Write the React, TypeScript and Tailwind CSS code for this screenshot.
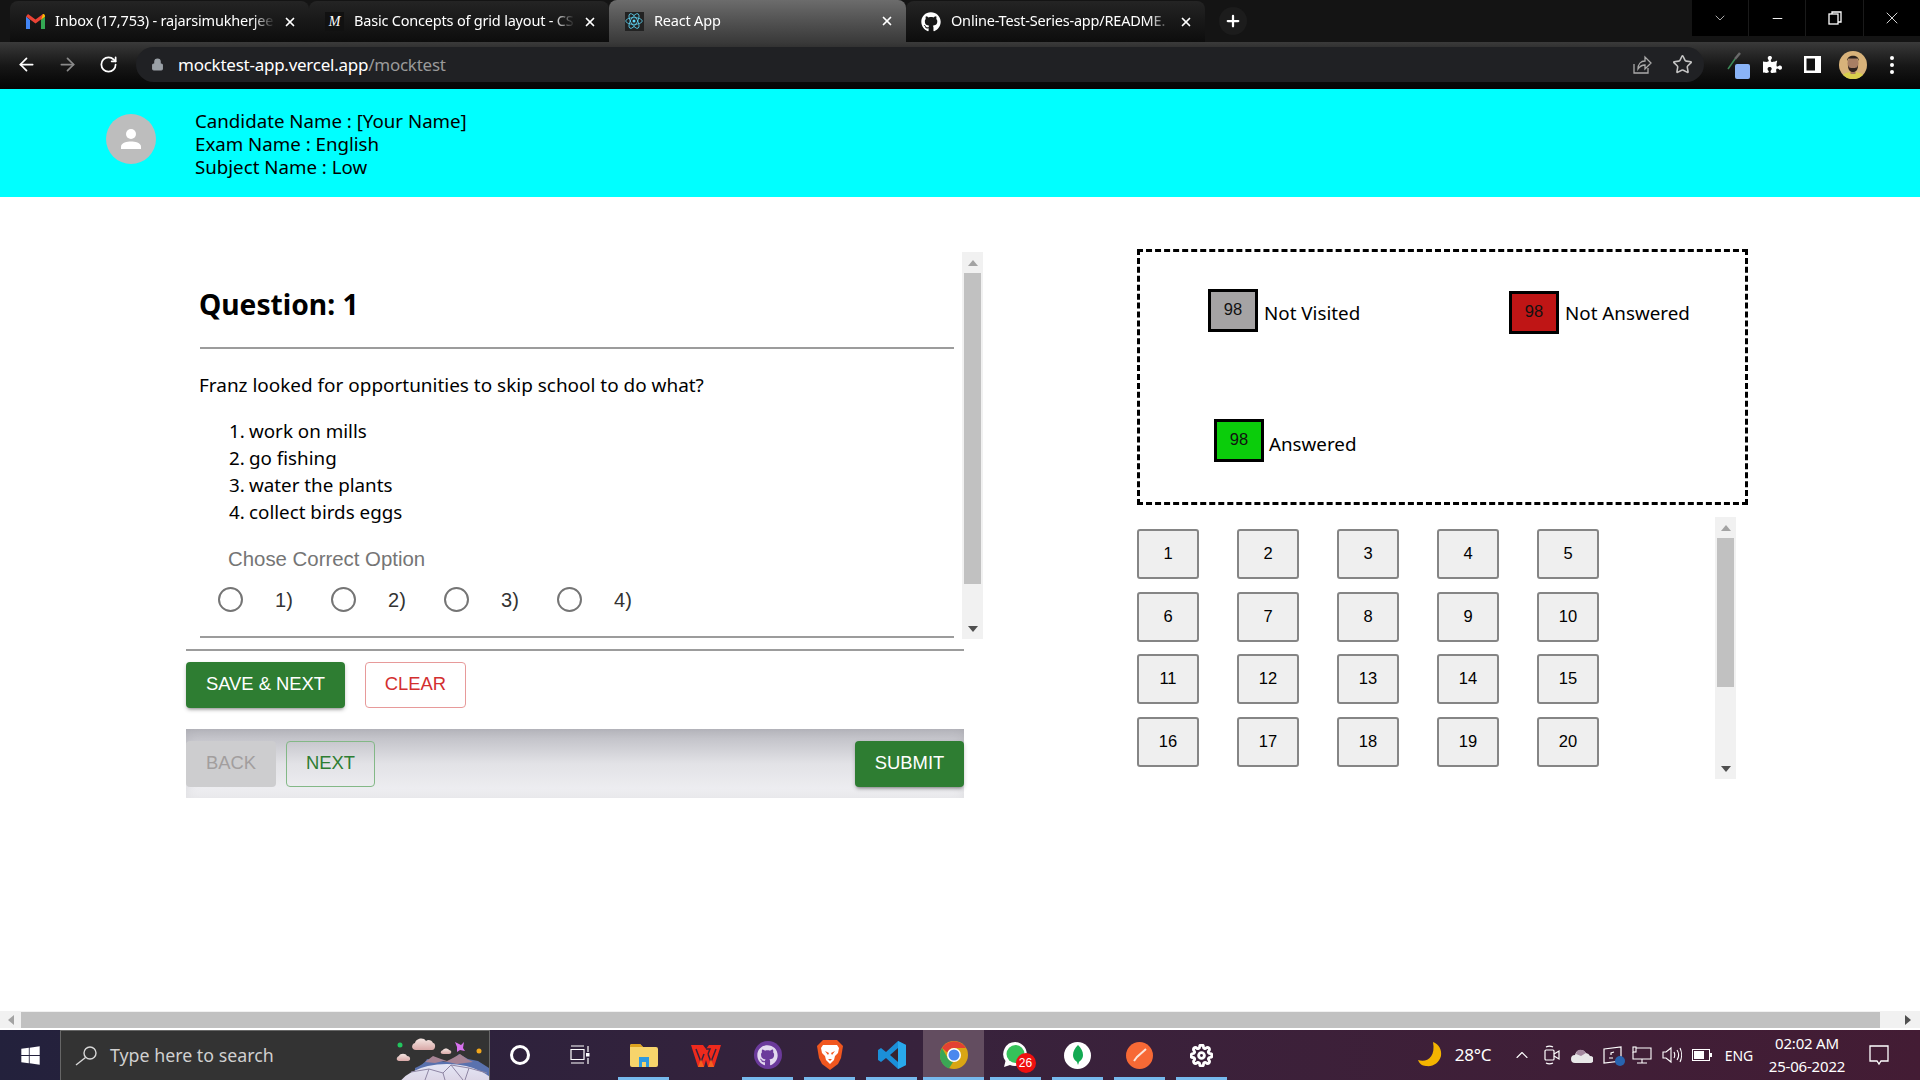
import { ArrowLeft, ArrowRight, ChevronDown, ChevronUp, Lock, Minus, Plus, RotateCw, Star, X } from "lucide-react";
import { FaGithub, FaPuzzlePiece, FaWindows } from "react-icons/fa";
import { FiSettings } from "react-icons/fi";

const UI_FONT = "font-['Noto_Sans','Open_Sans',sans-serif]";
const ARIAL = "font-['Liberation_Sans',Arial,sans-serif]";

function GmailIcon() {
  return (
    <svg width="19" height="15" viewBox="0 0 19 15">
      <path d="M0 2.5 0 15h4V6z" fill="#4285f4" />
      <path d="M15 6v9h4V2.500z" fill="#34a853" />
      <path d="M0 2.500 9.500 9.500 19 2.500 17 0 9.500 5.500 2 0z" fill="#ea4335" />
      <path d="M15 6l4-3.500V2c0-1.500-1-2-2-2z" fill="#fbbc04" />
    </svg>
  );
}

function ReactIcon({ size = 18 }: { size?: number }) {
  return (
    <svg width={size} height={size} viewBox="-12 -12 24 24" fill="none" stroke="#61dafb" strokeWidth="1">
      <circle r="2" fill="#61dafb" stroke="none" />
      <ellipse rx="11" ry="4.500" />
      <ellipse rx="11" ry="4.500" transform="rotate(60)" />
      <ellipse rx="11" ry="4.500" transform="rotate(120)" />
    </svg>
  );
}

function Tab({ width, title, icon, active }: { width: string; title: string; icon: React.ReactNode; active?: boolean }) {
  return (
    <div className={`${width} ${active ? "h-[42px] self-end rounded-t-lg bg-gradient-to-b from-[#6c6c6c] to-[#3a3a3a]" : "h-[41px] self-end rounded-t-lg bg-gradient-to-b from-[#242424] to-[#0d0d0d]"} flex shrink-0 items-center pl-[15px] pr-[12px]`}>
      <span className="flex w-[20px] shrink-0 justify-center">{icon}</span>
      <span className="ml-[10px] min-w-0 flex-1 overflow-hidden whitespace-nowrap pb-[1px] text-[14.500px] tracking-[-0.2px] text-white [mask-image:linear-gradient(to_right,black_90%,transparent)]">{title}</span>
      <X size={14} strokeWidth={3} className="ml-[8px] shrink-0 text-white" />
    </div>
  );
}

function TabStrip() {
  return (
    <div className="flex h-[42px] shrink-0 items-end bg-[#141414] pl-[10px]">
      <Tab width="w-[299px]" title="Inbox (17,753) - rajarsimukherjee" icon={<GmailIcon />} />
      <Tab width="w-[300px]" title="Basic Concepts of grid layout - CS" icon={<span className="flex h-[19px] w-[19px] items-center justify-center bg-[#111] font-['Liberation_Serif',serif] text-[14px] italic tracking-[-1px] text-white">M</span>} />
      <Tab active width="w-[297px]" title="React App" icon={<span className="flex h-[19px] w-[19px] items-center justify-center bg-[#222]"><ReactIcon /></span>} />
      <Tab width="w-[299px]" title="Online-Test-Series-app/README." icon={<FaGithub size={20} className="text-white" />} />
      <div className="mb-[7px] ml-[14px] flex h-[28px] w-[28px] items-center justify-center rounded-full bg-[#1c1c1c]">
        <Plus size={18} strokeWidth={3} className="text-white" />
      </div>
      <div className="mb-[6px] ml-auto flex h-[36px] w-[228px] self-start bg-black text-white">
        <span className="flex w-[57px] items-center justify-center border-r border-[#1a1a1a]"><ChevronDown size={16} strokeWidth={1} /></span>
        <span className="flex w-[57px] items-center justify-center border-r border-[#1a1a1a]"><Minus size={15} strokeWidth={1.500} /></span>
        <span className="flex w-[58px] items-center justify-center border-r border-[#1a1a1a]">
          <svg width="14" height="14" viewBox="0 0 14 14" fill="none" stroke="white" strokeWidth="1.300"><rect x="1" y="3" width="9" height="10" /><path d="M4 3V1h9v10h-3" /></svg>
        </span>
        <span className="flex w-[56px] items-center justify-center"><X size={20} strokeWidth={1} /></span>
      </div>
    </div>
  );
}

function Toolbar() {
  return (
    <div className="flex h-[47px] shrink-0 items-center bg-gradient-to-b from-[#3a3a3a] via-[#171717] to-[#050505] pb-[2px] text-white">
      <div className="flex w-[136px] shrink-0 items-center pl-[16px]">
        <ArrowLeft size={21} strokeWidth={2} />
        <ArrowRight size={21} strokeWidth={2} className="ml-[20px] text-[#8a8a8a]" />
        <RotateCw size={19} strokeWidth={2.200} className="ml-[21px]" />
      </div>
      <div className="flex h-[35px] w-[1568px] shrink-0 items-center rounded-full bg-[#202124] pl-[15px]">
        <Lock size={13} fill="#9aa0a6" strokeWidth={2} className="text-[#9aa0a6]" />
        <span className="ml-[14px] pt-[1px] text-[17px] tracking-[-0.25px]">
          mocktest-app.vercel.app<span className="text-[#9a9a9a]">/mocktest</span>
        </span>
        <svg width="22" height="22" viewBox="0 0 22 22" fill="none" stroke="#aaa" strokeWidth="1.300" className="ml-auto">
          <path d="M3 10v9h14v-5M7 15c0-5 3-8 7-8V3l6 6-6 6v-4c-3 0-5 1-7 4z" />
        </svg>
        <Star size={21} strokeWidth={1.800} className="mr-[11px] ml-[19px] text-[#c4c4c4]" />
      </div>
      <div className="relative ml-[23px] h-[28px] w-[26px] shrink-0">
        <svg width="14" height="18" viewBox="0 0 14 18" className="mt-[1px]">
          <path d="M1 17 8 7" stroke="#3c8a58" strokeWidth="1.500" />
          <path d="M8 7 13 1" stroke="#6a6a6a" strokeWidth="2.500" />
        </svg>
        <span className="absolute left-[8px] top-[13px] h-[15px] w-[15px] rounded-[2px] bg-[#8ab4f8]" />
      </div>
      <FaPuzzlePiece size={19} className="ml-[10px] shrink-0 text-white" />
      <svg width="17" height="17" viewBox="0 0 17 17" className="ml-[22px] shrink-0"><rect width="17" height="17" fill="white" /><rect x="2.500" y="2.500" width="8.500" height="12" fill="#111" /></svg>
      <svg width="28" height="28" viewBox="0 0 28 28" className="ml-[18px] shrink-0">
        <circle cx="14" cy="14" r="14" fill="#d8b27a" />
        <path d="M4 24c2-4 18-4 20 0a14 14 0 0 1-20 0z" fill="#d9cf4d" />
        <rect x="11.500" y="17" width="5" height="6" fill="#a57a5e" />
        <ellipse cx="14" cy="12.500" rx="5.500" ry="7.500" fill="#a87f64" />
        <path d="M8 10c0-7 12-7 12 0l-1.500-2.500h-9zM9 14c1 3 2 3 5 3s4 0 5-3c0 5-2 7-5 7s-5-2-5-7z" fill="#2b211c" />
      </svg>
      <span className="ml-[23px] flex w-[4px] shrink-0 flex-col gap-[3px]">
        <span className="h-[4px] w-[4px] rounded-full bg-white" />
        <span className="h-[4px] w-[4px] rounded-full bg-white" />
        <span className="h-[4px] w-[4px] rounded-full bg-white" />
      </span>
    </div>
  );
}

function Header() {
  return (
    <div className={`flex h-[108px] shrink-0 bg-[#00ffff] pl-[106px] pt-[20px] ${UI_FONT}`}>
      <div className="mt-[5px] flex h-[50px] w-[50px] items-center justify-center rounded-full bg-[#bdbdbd]">
        <svg width="30" height="30" viewBox="0 0 24 24" fill="white">
          <circle cx="12" cy="8" r="4" />
          <path d="M4 20v-2c0-3 5-4 8-4s8 1 8 4v2z" />
        </svg>
      </div>
      <div className="ml-[39px] text-[18.700px] leading-[23px] text-black">
        <div>Candidate Name : [Your Name]</div>
        <div>Exam Name : English</div>
        <div>Subject Name : Low</div>
      </div>
    </div>
  );
}

function Triangle({ up, color }: { up?: boolean; color: string }) {
  return (
    <svg width="10" height="6" viewBox="0 0 10 6" className="shrink-0">
      <path d={up ? "M5 0 10 6H0z" : "M0 0h10L5 6z"} fill={color} />
    </svg>
  );
}

function ScrollTrack({ thumbHeight, className }: { thumbHeight: string; className: string }) {
  return (
    <div className={`flex shrink-0 flex-col items-center bg-[#f1f1f1] ${className}`}>
      <div className="flex h-[21px] w-full items-center justify-center"><Triangle up color="#a3a3a3" /></div>
      <div className={`${thumbHeight} w-[17px] bg-[#c1c1c1]`} />
      <div className="mt-auto flex h-[21px] w-full items-center justify-center"><Triangle color="#505050" /></div>
    </div>
  );
}

const OPTIONS = ["work on mills", "go fishing", "water the plants", "collect birds eggs"];

function QuestionPanel() {
  return (
    <div className="flex h-[387px] justify-between pl-[14px]">
      <div className={`w-[754px] ${UI_FONT}`}>
        <h2 className="-ml-[1px] mt-[34px] text-[28.200px] font-bold leading-[36px] text-black">Question: 1</h2>
        <div className="mt-[25px] h-[2px] bg-[#9c9c9c]" />
        <p className="-ml-[1px] mt-[23px] text-[18.950px] leading-[27px] text-black">Franz looked for opportunities to skip school to do what?</p>
        <ol className="mt-[19px] pl-[29px] text-[18.800px] leading-[27px] text-black">
          {OPTIONS.map((option, i) => (
            <li key={option} className="flex">
              <span className="w-[20px]">{i + 1}.</span>
              <span>{option}</span>
            </li>
          ))}
        </ol>
        <div className={`ml-[28px] mt-[19px] text-[20.400px] leading-[28px] text-[#757575] ${ARIAL}`}>Chose Correct Option</div>
        <div className={`ml-[18px] mt-[13px] flex h-[27px] items-center text-[20px] text-[#333] ${ARIAL}`}>
          {[1, 2, 3, 4].map((n) => (
            <label key={n} className="flex w-[113px] items-center">
              <input type="radio" name="option" className="h-[25px] w-[25px] appearance-none rounded-full border-[2.500px] border-[#757575]" />
              <span className="ml-[32px]">{n})</span>
            </label>
          ))}
        </div>
        <div className="mt-[23px] h-[2px] bg-[#9c9c9c]" />
      </div>
      <ScrollTrack thumbHeight="h-[311px]" className="w-[21px]" />
    </div>
  );
}

function Actions() {
  const button = `flex h-[46px] items-center justify-center rounded-[4px] pb-[2px] text-[18.400px] ${ARIAL}`;
  const raised = "bg-[#2e7d32] text-white shadow-[0_3px_3px_-2px_rgba(0,0,0,0.3),0_2px_4px_rgba(0,0,0,0.2)]";
  return (
    <div className="w-[778px]">
      <div className="mt-[10px] h-[2px] bg-[#9c9c9c]" />
      <div className="mt-[11px] flex">
        <button className={`${button} ${raised} w-[159px]`}>SAVE &amp; NEXT</button>
        <button className={`${button} ml-[20px] w-[101px] border border-[#e79a9a] text-[#d32f2f]`}>CLEAR</button>
      </div>
      <div className="mt-[21px] flex h-[69px] bg-gradient-to-b from-[#b9b9c0] via-[#e2e2e6] to-[#f1f1f4] pt-[12px] shadow-[inset_0_0_12px_rgba(0,0,0,0.08)]">
        <button className={`${button} w-[90px] bg-[#cdcdcf] text-[#a29e9e]`}>BACK</button>
        <button className={`${button} ml-[10px] w-[89px] border border-[#83b886] text-[#2e7d32]`}>NEXT</button>
        <button className={`${button} ${raised} ml-auto w-[109px]`}>SUBMIT</button>
      </div>
    </div>
  );
}

function LegendItem({ bg, label, className, labelClass }: { bg: string; label: string; className: string; labelClass: string }) {
  return (
    <div className={`flex items-start ${className}`}>
      <span className={`${bg} flex h-[43px] w-[50px] shrink-0 items-center justify-center border-[3px] border-black pb-[2px] text-[16.500px] text-[#111] ${ARIAL}`}>98</span>
      <span className={`text-[18.800px] leading-[27px] text-black ${UI_FONT} ${labelClass}`}>{label}</span>
    </div>
  );
}

function Legend() {
  return (
    <div className="h-[256px] w-[611px] border-[3px] border-dashed border-black">
      <div className="flex">
        <LegendItem bg="bg-[#a5a3a4]" label="Not Visited" labelClass="ml-[6px] mt-[11px]" className="ml-[68px] mt-[37px] w-[301px]" />
        <LegendItem bg="bg-[#bf1515]" label="Not Answered" labelClass="ml-[6px] mt-[9px]" className="mt-[39px]" />
      </div>
      <LegendItem bg="bg-[#0bcd0b]" label="Answered" labelClass="ml-[5px] mt-[12px]" className="ml-[74px] mt-[85px]" />
    </div>
  );
}

function NumberGrid() {
  const numbers = Array.from({ length: 20 }, (_, i) => i + 1);
  return (
    <div className="mt-[12px] flex justify-between pr-[12px]">
      <div className="mt-[12.400px] grid grid-cols-[repeat(5,62px)] gap-x-[38px] gap-y-[12.500px] self-start">
        {numbers.map((n) => (
          <button key={n} className={`flex h-[50px] items-center justify-center rounded-[3px] border-2 border-[#858585] bg-[#efefef] pb-[2px] text-[16.500px] text-black ${ARIAL}`}>
            {n}
          </button>
        ))}
      </div>
      <ScrollTrack thumbHeight="h-[149px]" className="h-[262px] w-[21px]" />
    </div>
  );
}

function BottomScrollbar() {
  return (
    <div className="flex h-[19px] shrink-0 items-center border-b-2 border-white bg-[#f1f1f1]">
      <div className="flex w-[21px] justify-center"><svg width="6" height="10" viewBox="0 0 6 10"><path d="M6 0v10L0 5z" fill="#a3a3a3" /></svg></div>
      <div className="h-[16px] w-[1859px] bg-[#c1c1c1]" />
      <div className="flex flex-1 justify-end pr-[9px]"><svg width="6" height="10" viewBox="0 0 6 10"><path d="M0 0v10l6-5z" fill="#505050" /></svg></div>
    </div>
  );
}

function SearchArt() {
  return (
    <svg width="100" height="49" viewBox="0 0 100 49" className="absolute right-0 top-0">
      <defs>
        <linearGradient id="cloud" x1="0" y1="0" x2="0" y2="1">
          <stop offset="0" stopColor="#f4e6e2" />
          <stop offset="1" stopColor="#d9a9a8" />
        </linearGradient>
        <linearGradient id="planet" x1="0" y1="0" x2="0" y2="1">
          <stop offset="0" stopColor="#e4e6f6" />
          <stop offset="1" stopColor="#cbb3c4" />
        </linearGradient>
      </defs>
      <circle cx="11" cy="14" r="2.500" fill="#22c55e" />
      <circle cx="90" cy="20" r="2.500" fill="#f2a71b" />
      <path d="M27 19c-5 0-5-6-1-7 1-5 9-6 11-2 2-2 6-1 7 2 3 0 3 7-1 7z" fill="url(#cloud)" />
      <path d="M10 30c-3 0-3-4 0-5 1-3 7-3 8 0 4 0 4 5 1 5z" fill="url(#cloud)" />
      <path d="M54 23c-3 0-3-3 0-4 1-2 5-2 6 0 3 0 3 4 0 4z" fill="url(#cloud)" />
      <path d="m66 11 6 3 3-3-1 6 2 3-5-1-3 2 0-5z" fill="#d872ee" />
      <path d="M26 37c6-3 10-5 12-9l6 1 8 1 6 1 5-1 7-7 9 5 10 2 11 7v12H26z" fill="#5a72ae" />
      <path d="m36 31 8-6 8 3 6 2 6-3 7-4 7 5 6 3-16 2-14-3-8 2z" fill="#a78495" />
      <ellipse cx="58" cy="60" rx="50" ry="27" fill="url(#planet)" />
      <path d="M22 41 40 38l14 4 8-8 18 3 18 5M40 38l-4 11M54 42l2 7M62 34l12 15M80 37l-4 12" fill="none" stroke="#8f86a4" strokeWidth="1" />
    </svg>
  );
}

function AppSlot({ children, active, running = true }: { children: React.ReactNode; active?: boolean; running?: boolean }) {
  return (
    <div className={`relative flex h-full items-center justify-center ${active ? "w-[61px] bg-[#634d60]" : "w-[51px]"}`}>
      {children}
      {running && <span className="absolute inset-x-0 bottom-0 h-[3px] bg-[#76b9ed]" />}
    </div>
  );
}

function TrayItem({ children, className = "w-[30px]" }: { children: React.ReactNode; className?: string }) {
  return <div className={`flex h-full shrink-0 items-center justify-center ${className}`}>{children}</div>;
}

function Taskbar() {
  return (
    <div className={`flex h-[50px] shrink-0 items-stretch bg-gradient-to-r from-[#23213c] via-[#38223c] to-[#431c34] text-white ${UI_FONT}`}>
      <div className="flex w-[60px] items-center justify-center"><FaWindows size={21} /></div>
      <div className="relative flex w-[430px] items-center overflow-hidden border border-b-0 border-[#666] bg-[#333] pl-[14px]">
        <svg width="22" height="20" viewBox="0 0 22 20" fill="none" stroke="#d8d8d8" strokeWidth="1.400">
          <circle cx="15" cy="7" r="6" />
          <path d="M10.500 11.500 1 19" />
        </svg>
        <span className="ml-[13px] text-[17.800px] text-[#d0d0d0]">Type here to search</span>
        <SearchArt />
      </div>
      <div className="flex w-[60px] items-center justify-center">
        <span className="h-[20px] w-[20px] rounded-full border-[3px] border-white" />
      </div>
      <div className="flex w-[60px] items-center justify-center">
        <svg width="20" height="20" viewBox="0 0 20 20" fill="none" stroke="white" strokeWidth="1.200">
          <path d="M1 1h13M1 4.500h13v10H1zM1 18h13M18 1v6M18 13v6" />
          <rect x="16" y="8" width="3.500" height="3.500" fill="white" stroke="none" />
        </svg>
      </div>
      <div className="ml-[8px] flex items-stretch gap-[11px]">
        <AppSlot>
          <svg width="28" height="23" viewBox="0 0 28 23">
            <path d="M0 2a2 2 0 0 1 2-2h8l3 3h13a2 2 0 0 1 2 2v16a2 2 0 0 1-2 2H2a2 2 0 0 1-2-2z" fill="#f7d46b" />
            <path d="M0 2a2 2 0 0 1 2-2h8l3 3H0z" fill="#dda21f" />
            <path d="M9 23v-9h10v9h-3v-5h-4v5z" fill="#2e9ae0" />
            <rect x="9" y="13" width="10" height="3" fill="#2e9ae0" />
          </svg>
        </AppSlot>
        <AppSlot running={false}>
          <svg width="30" height="23" viewBox="0 0 30 23">
            <path d="M0 1h12l3 4 3-4h12l-7 22h-6l-2-7-2 7H7z" fill="#ee2a1d" />
            <path d="M5 5l5 13 3-8M25 5l-5 13-3-8M15 5l4 0-2 5" fill="none" stroke="#38223c" strokeWidth="1.500" />
            <path d="M7 23h6l-3-8zM17 23h6l-3-8z" fill="#f5601e" />
          </svg>
        </AppSlot>
        <AppSlot>
          <span className="flex h-[28px] w-[28px] items-center justify-center rounded-full bg-[#6b3a9b]"><FaGithub size={21} className="text-[#e3d9ef]" /></span>
        </AppSlot>
        <AppSlot>
          <svg width="26" height="30" viewBox="0 0 26 30">
            <path d="M6 0h14l3 3 3 3-2 12-3 6-8 6-8-6-3-6L0 6l3-3z" fill="#f1571f" />
            <path d="M6 5h14l2 3-1 5-3 3-1 4-4 4-4-4-1-4-3-3-1-5z" fill="white" />
            <path d="M8 11l4 2-1 2zM18 11l-4 2 1 2zM11 19h4l-2 2z" fill="#f1571f" />
          </svg>
        </AppSlot>
        <AppSlot>
          <svg width="30" height="30" viewBox="0 0 30 30">
            <path d="M21 1 29 5v20l-8 4L9 18l-5 4-3-2v-10l3-2 5 4z" fill="#1b8fd8" />
            <path d="M21 8 13 15l8 7z" fill="#38232e" />
            <path d="M21 1 29 5v20l-8 4z" fill="#29a9ec" />
          </svg>
        </AppSlot>
        <div className="-mx-[5px]">
          <AppSlot active>
            <svg width="28" height="28" viewBox="-14 -14 28 28">
              <circle r="14" fill="#d9a514" />
              <path d="M-12-7A14 14 0 0 1 12-7H0a7 7 0 0 0-6.500 4.500z" fill="#e34133" />
              <path d="M-12-7-6 3.500a7 7 0 0 0 5 3.500L-5 13.500A14 14 0 0 1-12-7z" fill="#3ba755" />
              <circle r="7" fill="white" />
              <circle r="5.500" fill="#4a88ee" />
            </svg>
          </AppSlot>
        </div>
        <AppSlot>
          <div className="relative h-[28px] w-[28px]">
            <svg width="27" height="27" viewBox="0 0 27 27"><path d="M13.500 1a12 12 0 0 0-10 19L2 26l6-2A12 12 0 1 0 13.500 1z" fill="white" /><circle cx="13.500" cy="13" r="9" fill="#35c25a" /></svg>
            <span className={`absolute -bottom-[4px] -right-[6px] flex h-[20px] w-[20px] items-center justify-center rounded-full bg-[#f01010] text-[12px] text-white ${ARIAL}`}>26</span>
          </div>
        </AppSlot>
        <AppSlot>
          <span className="flex h-[27px] w-[27px] items-center justify-center rounded-full bg-white">
            <svg width="10" height="20" viewBox="0 0 10 20"><path d="M5 0c3 3 5 6 5 10s-3 6-4 7l-1 3-1-3c-1-1-4-3-4-7s2-7 5-10z" fill="#13aa52" /></svg>
          </span>
        </AppSlot>
        <AppSlot>
          <span className="flex h-[27px] w-[27px] items-center justify-center rounded-full bg-[#f76935]">
            <svg width="16" height="16" viewBox="0 0 16 16" fill="none" stroke="#fbe5da" strokeWidth="2"><path d="M14 2 5 10 2 14" /></svg>
          </span>
        </AppSlot>
        <AppSlot>
          <FiSettings size={23} strokeWidth={3} />
        </AppSlot>
      </div>
      <div className="ml-auto flex items-stretch pr-[15px]">
        <TrayItem>
          <svg width="28" height="28" viewBox="0 0 28 28"><path d="M17 1c6 2 9 8 8 14-2 7-8 11-15 10-4 0-7-3-8-6 8 3 18-2 15-18z" fill="#f4b400" /></svg>
        </TrayItem>
        <TrayItem className="ml-[9px] w-[38px]"><span className="text-[17px] tracking-[-0.2px]">28°C</span></TrayItem>
        <TrayItem className="ml-[15px] w-[30px]"><ChevronUp size={20} strokeWidth={1.300} /></TrayItem>
        <TrayItem>
          <svg width="16" height="20" viewBox="0 0 16 20" fill="none" stroke="white" strokeWidth="1.200"><rect x="1" y="5" width="9" height="10" rx="1" /><path d="m10 9 5-3v8l-5-3M2 2c2-1 5-1 7 0M2 18c2 1 5 1 7 0" /></svg>
        </TrayItem>
        <TrayItem>
          <svg width="22" height="15" viewBox="0 0 22 15"><path d="M4 15a4 4 0 0 1 0-8 6 6 0 0 1 11-2 5 5 0 0 1 4 3 3.500 3.500 0 0 1 0 7z" fill="#e8e8e8" /><path d="M6 3a6 6 0 0 1 9 2l-5 3-5-2z" fill="#a58aa0" /></svg>
        </TrayItem>
        <TrayItem>
          <div className="relative h-[18px] w-[19px]">
            <svg width="19" height="18" viewBox="0 0 19 18" fill="none" stroke="white" strokeWidth="1.200"><path d="M1 3 18 1v14L1 17zM11 6 8 7v2M6 12h4" /></svg>
            <span className="absolute -bottom-[2px] -right-[3px] h-[10px] w-[10px] rounded-full bg-[#2864b0]" />
          </div>
        </TrayItem>
        <TrayItem>
          <svg width="20" height="18" viewBox="0 0 20 18" fill="none" stroke="white" strokeWidth="1.100"><path d="M4 2h15v11H1V6M10 13v4M5 17h10" /><rect x="1" y="1" width="3" height="5" /></svg>
        </TrayItem>
        <TrayItem>
          <svg width="20" height="18" viewBox="0 0 20 18" fill="none" stroke="white" strokeWidth="1.100"><path d="M1 6h3l5-4v14l-5-4H1zM12 6c1 2 1 4 0 6M15 4c2 3 2 7 0 10M18 2c2 4 2 10 0 14" /></svg>
        </TrayItem>
        <TrayItem>
          <svg width="20" height="12" viewBox="0 0 20 12" fill="none"><rect x="0.500" y="0.500" width="17" height="11" stroke="white" /><rect x="2" y="2" width="10" height="8" fill="white" /><rect x="18" y="4" width="2" height="4" fill="white" /></svg>
        </TrayItem>
        <TrayItem className="w-[44px]"><span className="text-[14px]">ENG</span></TrayItem>
        <TrayItem className="w-[92px]">
          <div className="text-center text-[15px] leading-[23px] tracking-[-0.2px]">
            <div>02:02 AM</div>
            <div>25-06-2022</div>
          </div>
        </TrayItem>
        <TrayItem className="w-[52px]">
          <svg width="20" height="21" viewBox="0 0 20 21" fill="none" stroke="white" strokeWidth="1.300"><path d="M1 1h18v15h-7l-2 3-2-3H1z" /></svg>
        </TrayItem>
      </div>
    </div>
  );
}

export default function App() {
  return (
    <div className={`flex h-[1080px] w-[1920px] flex-col overflow-hidden bg-white ${UI_FONT}`}>
      <TabStrip />
      <Toolbar />
      <Header />
      <main className="flex min-h-0 flex-1">
        <div className="ml-[186px] mt-[55px] w-[797px]">
          <QuestionPanel />
          <Actions />
        </div>
        <div className="ml-[154px] mt-[52px] w-[611px]">
          <Legend />
          <NumberGrid />
        </div>
      </main>
      <BottomScrollbar />
      <Taskbar />
    </div>
  );
}
